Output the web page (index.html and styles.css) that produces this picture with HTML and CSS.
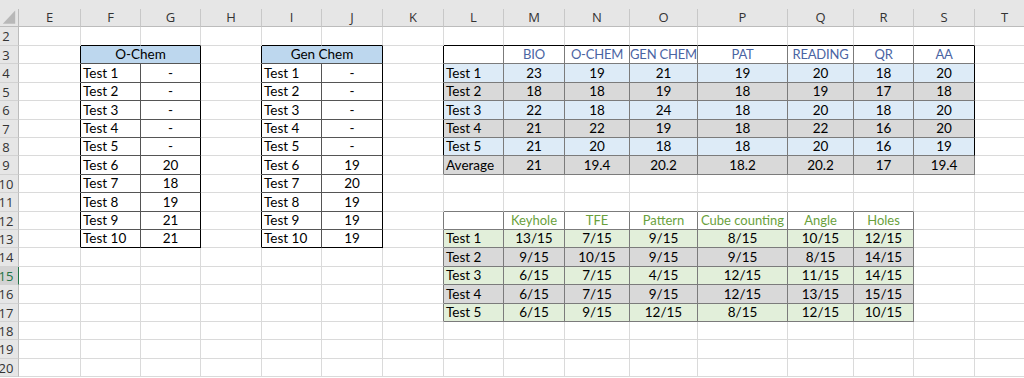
FILE: index.html
```html
<!DOCTYPE html>
<html lang="en">
<head>
<meta charset="utf-8">
<title>Scores</title>
<link rel="stylesheet" href="styles.css">
</head>
<body>
<div class="top"></div>
<div class="sheet">
  <!-- column headers -->
  <div class="ch corner"><svg width="19" height="17" viewBox="0 0 19 17"><polygon points="16,1 16,15 3,15" fill="#b8b8b8"/></svg></div>
  <div class="ch">E</div><div class="ch">F</div><div class="ch">G</div><div class="ch">H</div><div class="ch">I</div><div class="ch">J</div><div class="ch">K</div><div class="ch">L</div><div class="ch">M</div><div class="ch">N</div><div class="ch">O</div><div class="ch">P</div><div class="ch">Q</div><div class="ch">R</div><div class="ch">S</div><div class="ch">T</div>

  <!-- row 2 -->
  <div class="rh"><span>2</span></div>
  <div class="c"></div><div class="c bk"></div><div class="c bk"></div><div class="c"></div><div class="c bk"></div><div class="c bk"></div><div class="c"></div>
  <div class="c bk"></div><div class="c bk"></div><div class="c bk"></div><div class="c bk"></div><div class="c bk"></div><div class="c bk"></div><div class="c bk"></div><div class="c bk"></div>
  <div class="c"></div>

  <!-- row 3 -->
  <div class="rh"><span>3</span></div>
  <div class="c rk"></div>
  <div class="c span2 fh rk bd">O-Chem</div>
  <div class="c rk"></div>
  <div class="c span2 fh rk bd">Gen Chem</div>
  <div class="c rk"></div>
  <div class="c rm bm"></div>
  <div class="c num tb rm bm">BIO</div>
  <div class="c num tb rm bm">O-CHEM</div>
  <div class="c num tb rm bm">GEN CHEM</div>
  <div class="c num tb rm bm">PAT</div>
  <div class="c num tb rm bm">READING</div>
  <div class="c num tb rm bm">QR</div>
  <div class="c num tb rk bm">AA</div>
  <div class="c"></div>

  <!-- row 4 -->
  <div class="rh"><span>4</span></div>
  <div class="c rk"></div>
  <div class="c lbl rd bd">Test 1</div><div class="c num rk bd">-</div>
  <div class="c rk"></div>
  <div class="c lbl rd bd">Test 1</div><div class="c num rk bd">-</div>
  <div class="c rk"></div>
  <div class="c lbl rm bm fb">Test 1</div>
  <div class="c num rm bm fb">23</div><div class="c num rm bm fb">19</div><div class="c num rm bm fb">21</div><div class="c num rm bm fb">19</div><div class="c num rm bm fb">20</div><div class="c num rm bm fb">18</div><div class="c num rk bm fb">20</div>
  <div class="c"></div>

  <!-- row 5 -->
  <div class="rh"><span>5</span></div>
  <div class="c rk"></div>
  <div class="c lbl rd bd">Test 2</div><div class="c num rk bd">-</div>
  <div class="c rk"></div>
  <div class="c lbl rd bd">Test 2</div><div class="c num rk bd">-</div>
  <div class="c rk"></div>
  <div class="c lbl rm bm fg">Test 2</div>
  <div class="c num rm bm fg">18</div><div class="c num rm bm fg">18</div><div class="c num rm bm fg">19</div><div class="c num rm bm fg">18</div><div class="c num rm bm fg">19</div><div class="c num rm bm fg">17</div><div class="c num rk bm fg">18</div>
  <div class="c"></div>

  <!-- row 6 -->
  <div class="rh"><span>6</span></div>
  <div class="c rk"></div>
  <div class="c lbl rd bd">Test 3</div><div class="c num rk bd">-</div>
  <div class="c rk"></div>
  <div class="c lbl rd bd">Test 3</div><div class="c num rk bd">-</div>
  <div class="c rk"></div>
  <div class="c lbl rm bm fb">Test 3</div>
  <div class="c num rm bm fb">22</div><div class="c num rm bm fb">18</div><div class="c num rm bm fb">24</div><div class="c num rm bm fb">18</div><div class="c num rm bm fb">20</div><div class="c num rm bm fb">18</div><div class="c num rk bm fb">20</div>
  <div class="c"></div>

  <!-- row 7 -->
  <div class="rh"><span>7</span></div>
  <div class="c rk"></div>
  <div class="c lbl rd bd">Test 4</div><div class="c num rk bd">-</div>
  <div class="c rk"></div>
  <div class="c lbl rd bd">Test 4</div><div class="c num rk bd">-</div>
  <div class="c rk"></div>
  <div class="c lbl rm bm fg">Test 4</div>
  <div class="c num rm bm fg">21</div><div class="c num rm bm fg">22</div><div class="c num rm bm fg">19</div><div class="c num rm bm fg">18</div><div class="c num rm bm fg">22</div><div class="c num rm bm fg">16</div><div class="c num rk bm fg">20</div>
  <div class="c"></div>

  <!-- row 8 -->
  <div class="rh"><span>8</span></div>
  <div class="c rk"></div>
  <div class="c lbl rd bd">Test 5</div><div class="c num rk bd">-</div>
  <div class="c rk"></div>
  <div class="c lbl rd bd">Test 5</div><div class="c num rk bd">-</div>
  <div class="c rk"></div>
  <div class="c lbl rm bm fb">Test 5</div>
  <div class="c num rm bm fb">21</div><div class="c num rm bm fb">20</div><div class="c num rm bm fb">18</div><div class="c num rm bm fb">18</div><div class="c num rm bm fb">20</div><div class="c num rm bm fb">16</div><div class="c num rk bm fb">19</div>
  <div class="c"></div>

  <!-- row 9 -->
  <div class="rh"><span>9</span></div>
  <div class="c rk"></div>
  <div class="c lbl rd bd">Test 6</div><div class="c num rk bd">20</div>
  <div class="c rk"></div>
  <div class="c lbl rd bd">Test 6</div><div class="c num rk bd">19</div>
  <div class="c rm"></div>
  <div class="c lbl rm bm fg">Average</div>
  <div class="c num rm bm fg">21</div><div class="c num rm bm fg">19.4</div><div class="c num rm bm fg">20.2</div><div class="c num rm bm fg">18.2</div><div class="c num rm bm fg">20.2</div><div class="c num rm bm fg">17</div><div class="c num rm bm fg">19.4</div>
  <div class="c"></div>

  <!-- row 10 -->
  <div class="rh"><span>10</span></div>
  <div class="c rk"></div>
  <div class="c lbl rd bd">Test 7</div><div class="c num rk bd">18</div>
  <div class="c rk"></div>
  <div class="c lbl rd bd">Test 7</div><div class="c num rk bd">20</div>
  <div class="c"></div>
  <div class="c"></div><div class="c"></div><div class="c"></div><div class="c"></div><div class="c"></div><div class="c"></div><div class="c"></div><div class="c"></div>
  <div class="c"></div>

  <!-- row 11 -->
  <div class="rh"><span>11</span></div>
  <div class="c rk"></div>
  <div class="c lbl rd bd">Test 8</div><div class="c num rk bd">19</div>
  <div class="c rk"></div>
  <div class="c lbl rd bd">Test 8</div><div class="c num rk bd">19</div>
  <div class="c"></div>
  <div class="c bm"></div><div class="c bm"></div><div class="c bm"></div><div class="c bm"></div><div class="c bm"></div><div class="c bm"></div><div class="c bm"></div>
  <div class="c"></div>
  <div class="c"></div>

  <!-- row 12 -->
  <div class="rh"><span>12</span></div>
  <div class="c rk"></div>
  <div class="c lbl rd bd">Test 9</div><div class="c num rk bd">21</div>
  <div class="c rk"></div>
  <div class="c lbl rd bd">Test 9</div><div class="c num rk bd">19</div>
  <div class="c rm"></div>
  <div class="c rm bm"></div>
  <div class="c num tg rm bm">Keyhole</div>
  <div class="c num tg rm bm">TFE</div>
  <div class="c num tg rm bm">Pattern</div>
  <div class="c num tg rm bm">Cube counting</div>
  <div class="c num tg rm bm">Angle</div>
  <div class="c num tg rm bm">Holes</div>
  <div class="c"></div>
  <div class="c"></div>

  <!-- row 13 -->
  <div class="rh"><span>13</span></div>
  <div class="c rk"></div>
  <div class="c lbl rd bk">Test 10</div><div class="c num rk bk">21</div>
  <div class="c rk"></div>
  <div class="c lbl rd bk">Test 10</div><div class="c num rk bk">19</div>
  <div class="c rm"></div>
  <div class="c lbl rm bm fn">Test 1</div>
  <div class="c num rm bm fn">13/15</div><div class="c num rm bm fn">7/15</div><div class="c num rm bm fn">9/15</div><div class="c num rm bm fn">8/15</div><div class="c num rm bm fn">10/15</div><div class="c num rm bm fn">12/15</div>
  <div class="c"></div>
  <div class="c"></div>

  <!-- row 14 -->
  <div class="rh"><span>14</span></div>
  <div class="c"></div><div class="c"></div><div class="c"></div><div class="c"></div><div class="c"></div><div class="c"></div>
  <div class="c rm"></div>
  <div class="c lbl rm bm fg">Test 2</div>
  <div class="c num rm bm fg">9/15</div><div class="c num rm bm fg">10/15</div><div class="c num rm bm fg">9/15</div><div class="c num rm bm fg">9/15</div><div class="c num rm bm fg">8/15</div><div class="c num rm bm fg">14/15</div>
  <div class="c"></div>
  <div class="c"></div>

  <!-- row 15 -->
  <div class="rh sel"><span>15</span></div>
  <div class="c"></div><div class="c"></div><div class="c"></div><div class="c"></div><div class="c"></div><div class="c"></div>
  <div class="c rm"></div>
  <div class="c lbl rm bm fn">Test 3</div>
  <div class="c num rm bm fn">6/15</div><div class="c num rm bm fn">7/15</div><div class="c num rm bm fn">4/15</div><div class="c num rm bm fn">12/15</div><div class="c num rm bm fn">11/15</div><div class="c num rm bm fn">14/15</div>
  <div class="c"></div>
  <div class="c"></div>

  <!-- row 16 -->
  <div class="rh"><span>16</span></div>
  <div class="c"></div><div class="c"></div><div class="c"></div><div class="c"></div><div class="c"></div><div class="c"></div>
  <div class="c rm"></div>
  <div class="c lbl rm bm fg">Test 4</div>
  <div class="c num rm bm fg">6/15</div><div class="c num rm bm fg">7/15</div><div class="c num rm bm fg">9/15</div><div class="c num rm bm fg">12/15</div><div class="c num rm bm fg">13/15</div><div class="c num rm bm fg">15/15</div>
  <div class="c"></div>
  <div class="c"></div>

  <!-- row 17 -->
  <div class="rh"><span>17</span></div>
  <div class="c"></div><div class="c"></div><div class="c"></div><div class="c"></div><div class="c"></div><div class="c"></div>
  <div class="c rm"></div>
  <div class="c lbl rm bm fn">Test 5</div>
  <div class="c num rm bm fn">6/15</div><div class="c num rm bm fn">9/15</div><div class="c num rm bm fn">12/15</div><div class="c num rm bm fn">8/15</div><div class="c num rm bm fn">12/15</div><div class="c num rm bm fn">10/15</div>
  <div class="c"></div>
  <div class="c"></div>

  <!-- row 18 -->
  <div class="rh"><span>18</span></div>
  <div class="c"></div><div class="c"></div><div class="c"></div><div class="c"></div><div class="c"></div><div class="c"></div><div class="c"></div><div class="c"></div>
  <div class="c"></div><div class="c"></div><div class="c"></div><div class="c"></div><div class="c"></div><div class="c"></div><div class="c"></div><div class="c"></div>

  <!-- row 19 -->
  <div class="rh"><span>19</span></div>
  <div class="c"></div><div class="c"></div><div class="c"></div><div class="c"></div><div class="c"></div><div class="c"></div><div class="c"></div><div class="c"></div>
  <div class="c"></div><div class="c"></div><div class="c"></div><div class="c"></div><div class="c"></div><div class="c"></div><div class="c"></div><div class="c"></div>

  <!-- row 20 -->
  <div class="rh"><span>20</span></div>
  <div class="c"></div><div class="c"></div><div class="c"></div><div class="c"></div><div class="c"></div><div class="c"></div><div class="c"></div><div class="c"></div>
  <div class="c"></div><div class="c"></div><div class="c"></div><div class="c"></div><div class="c"></div><div class="c"></div><div class="c"></div><div class="c"></div>
</div>
</body>
</html>
```

FILE: styles.css
```css
:root {
  --grid: #dadada;
  --hdr: #e6e6e6;
  --black: #000;
  --dark: #555;
  --mid: #7b7b7b;
}

html, body {
  margin: 0;
  padding: 0;
  background: #fff;
  overflow: hidden;
}

body {
  font-family: Lato, "Liberation Sans", sans-serif;
  width: 1024px;
  height: 378px;
}

.top {
  height: 9px;
  background: var(--hdr);
}

.sheet {
  display: grid;
  width: max-content;
  grid-template-columns: 19px 62px 60px 60px 61px 60px 61px 61px 60px 61px 65px 68px 90px 66px 60px 61px 60px;
  grid-template-rows: 18px 19px 18px 19px 18px 19px 18px 18px 19px 18px 19px 18px 18px 19px 18px 19px 18px 18px 19px 18px;
}

.ch {
  box-sizing: border-box;
  background: var(--hdr);
  border-right: 1px solid #c8c8c8;
  border-bottom: 1px solid #bcbcbc;
  font-family: "Open Sans", "Noto Sans", sans-serif;
  font-size: 13px;
  color: #333;
  display: flex;
  align-items: center;
  justify-content: center;
  line-height: 17px;
}

.corner {
  border-right-color: #bcbcbc;
  align-items: flex-start;
  justify-content: flex-start;
}

.corner svg {
  display: block;
}

.rh {
  box-sizing: border-box;
  background: var(--hdr);
  border-right: 1px solid #bcbcbc;
  border-bottom: 1px solid #d2d2d2;
  font-family: "Open Sans", "Noto Sans", sans-serif;
  font-size: 13px;
  color: #333;
  overflow: hidden;
  display: flex;
  align-items: center;
}

.rh span {
  display: block;
  width: 26px;
  margin-left: -7px;
  text-align: center;
  flex: none;
}

.rh.sel {
  background: #d3d3d3;
  color: #217346;
  border-right-color: #217346;
}

.c {
  box-sizing: border-box;
  border-right: 1px solid var(--grid);
  border-bottom: 1px solid var(--grid);
  font-size: 13.5px;
  line-height: 17px;
  color: #000;
  display: flex;
  align-items: flex-end;
  white-space: nowrap;
  overflow: hidden;
}

.num { justify-content: center; }
.lbl { padding-left: 2px; }
.span2 { grid-column: span 2; justify-content: center; }

.rk { border-right-color: var(--black); }
.bk { border-bottom-color: var(--black); }
.rd { border-right-color: var(--dark); }
.bd { border-bottom-color: var(--dark); }
.rm { border-right-color: var(--mid); }
.bm { border-bottom-color: var(--mid); }

.fb { background: #ddebf7; }
.fg { background: #d9d9d9; }
.fn { background: #e2efda; }
.fh { background: #bdd7ee; }

.tb { color: #4a64a3; font-size: 13px; letter-spacing: -0.2px; }
.tg { color: #6a9f3c; font-size: 13px; }
```
